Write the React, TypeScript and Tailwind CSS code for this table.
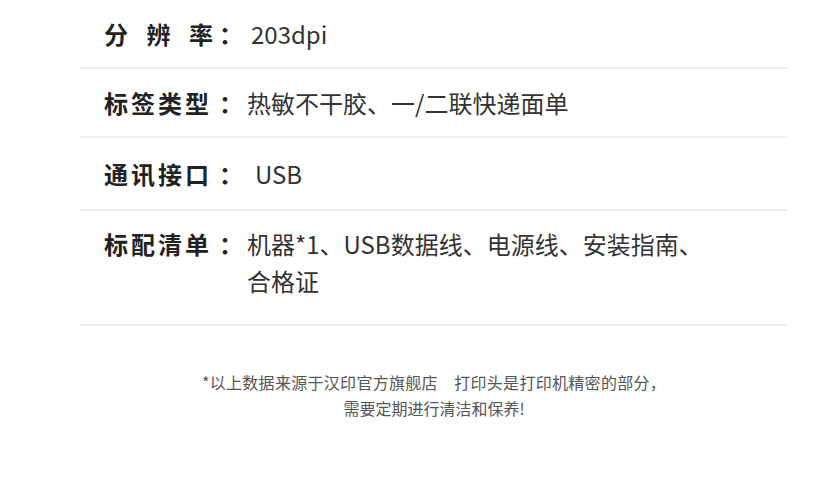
const font = "font-['Noto_Sans_CJK_SC','Noto_Sans',sans-serif]";

function Label({ text, spread }: { text: string; spread?: boolean }) {
  return (
    <div className="flex shrink-0 items-center text-[24px] font-bold text-[#222]">
      {spread ? (
        <div className="flex w-[109px] justify-between">
          {text.split("").map((c) => (
            <span key={c}>{c}</span>
          ))}
        </div>
      ) : (
        <span className="tracking-[3px]">{text}</span>
      )}
      <span className={spread ? "ml-[6px] w-[32px]" : "ml-[7px] w-[28px]"}>：</span>
    </div>
  );
}

export default function App() {
  return (
    <div className={`w-[820px] h-[500px] bg-white ${font}`}>
      <div className="ml-[80px] w-[707px]">
        {/* spec rows */}
        <div className="flex h-[69px] items-center border-b-2 border-[#efefef] pl-[24px]">
          <Label text="分辨率" spread />
          <span className="text-[24px] text-[#333]">203dpi</span>
        </div>
        <div className="flex h-[69px] items-center border-b-2 border-[#efefef] pl-[24px]">
          <Label text="标签类型" />
          <span className="text-[24px] text-[#333]">热敏不干胶、一/二联快递面单</span>
        </div>
        <div className="flex h-[73px] items-center border-b-2 border-[#efefef] pl-[24px]">
          <Label text="通讯接口" />
          <span className="pl-[8px] text-[24px] text-[#333]">USB</span>
        </div>
        <div className="flex h-[115px] items-start border-b-2 border-[#efefef] pl-[24px] pt-[14px]">
          <div className="leading-[37px]">
            <Label text="标配清单" />
          </div>
          <p className="w-[470px] text-[24px] leading-[37px] text-[#333]">
            机器*1、USB数据线、电源线、安装指南、合格证
          </p>
        </div>
      </div>

      {/* footnote */}
      <div className="mt-[43px] pl-[48px] text-center text-[16px] leading-[26px] text-[#555]">
        <p className="tracking-[0.3px]">*以上数据来源于汉印官方旗舰店　打印头是打印机精密的部分，</p>
        <p>需要定期进行清洁和保养!</p>
      </div>
    </div>
  );
}
